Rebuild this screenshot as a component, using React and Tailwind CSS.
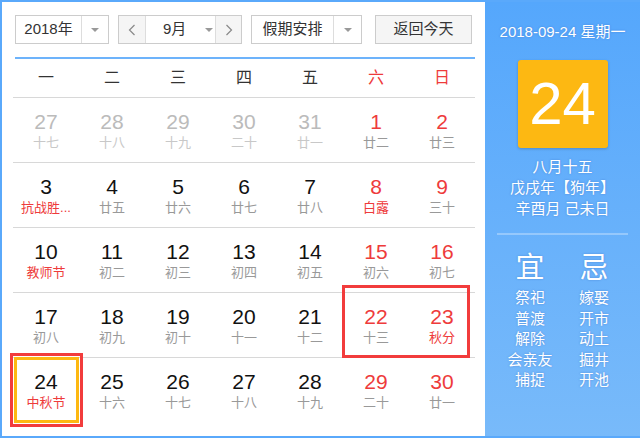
import React from "react";

const font = { fontFamily: '"Liberation Sans", Arial, "Noto Sans CJK SC", sans-serif' };

const weekdays = ["一", "二", "三", "四", "五", "六", "日"];

// [day, lunar, flags] flags: p = prev month, h = holiday text red
const rows = [
  [["27", "十七", "p"], ["28", "十八", "p"], ["29", "十九", "p"], ["30", "二十", "p"], ["31", "廿一", "p"], ["1", "廿二"], ["2", "廿三"]],
  [["3", "抗战胜...", "h"], ["4", "廿五"], ["5", "廿六"], ["6", "廿七"], ["7", "廿八"], ["8", "白露", "h"], ["9", "三十"]],
  [["10", "教师节", "h"], ["11", "初二"], ["12", "初三"], ["13", "初四"], ["14", "初五"], ["15", "初六"], ["16", "初七"]],
  [["17", "初八"], ["18", "初九"], ["19", "初十"], ["20", "十一"], ["21", "十二"], ["22", "十三"], ["23", "秋分", "h"]],
  [["24", "中秋节", "h"], ["25", "十六"], ["26", "十七"], ["27", "十八"], ["28", "十九"], ["29", "二十"], ["30", "廿一"]],
];

const yi = ["祭祀", "普渡", "解除", "会亲友", "捕捉"];
const ji = ["嫁娶", "开市", "动土", "掘井", "开池"];

function Caret() {
  return <span className="w-0 h-0 border-l-[4px] border-r-[4px] border-t-[4px] border-l-transparent border-r-transparent border-t-[#999]" />;
}

function Chevron({ dir }) {
  return (
    <svg width="8" height="12" viewBox="0 0 8 12">
      <polyline
        points={dir === "left" ? "6.5,1 1.5,6 6.5,11" : "1.5,1 6.5,6 1.5,11"}
        fill="none"
        stroke="#888"
        strokeWidth="1.2"
      />
    </svg>
  );
}

function Cell({ d, col }) {
  const [day, lunar, flag] = d;
  const weekend = col >= 5;
  let numColor = "text-[#111]";
  if (flag === "p") numColor = "text-[#bbb]";
  else if (weekend) numColor = "text-[#ee3b3b]";
  let lunarColor = "text-[#999]";
  if (flag === "p") lunarColor = "text-[#c8c8c8]";
  if (flag === "h") lunarColor = "text-[#ee3b3b]";
  return (
    <div className="flex flex-col items-center pt-[12px]">
      <div className={`text-[21px] leading-[24px] ${numColor}`}>{day}</div>
      <div className={`text-[13px] leading-[18px] whitespace-nowrap ${lunarColor}`}>{lunar}</div>
    </div>
  );
}

export default function App() {
  return (
    <div className="relative w-[640px] h-[440px] bg-white" style={font}>
      <div className="flex h-[438px] border-l-2 border-t-2 border-b-2 border-[#5aa9fb]">
        {/* calendar */}
        <div className="w-[483px] pt-[13px]">
          <div className="flex items-center h-[29px] ml-[13px] text-[15px] text-[#333]">
            <div className="flex h-full w-[94px] border border-[#ccc]">
              <div className="flex-1 flex items-center justify-center">2018年</div>
              <div className="w-[27px] border-l border-[#ddd] flex items-center justify-center">
                <Caret />
              </div>
            </div>
            <div className="flex h-full w-[124px] ml-[9px] border border-[#ccc]">
              <div className="w-[27px] bg-[#f5f5f5] border-r border-[#ddd] flex items-center justify-center">
                <Chevron dir="left" />
              </div>
              <div className="flex-1 flex items-center pl-[17px] gap-[19px]">
                <span>9月</span>
                <Caret />
              </div>
              <div className="w-[26px] bg-[#f5f5f5] border-l border-[#ddd] flex items-center justify-center">
                <Chevron dir="right" />
              </div>
            </div>
            <div className="flex h-full w-[111px] ml-[9px] border border-[#ccc]">
              <div className="flex-1 flex items-center justify-center">假期安排</div>
              <div className="w-[28px] border-l border-[#ddd] flex items-center justify-center">
                <Caret />
              </div>
            </div>
            <div className="flex h-full w-[97px] ml-[13px] border border-[#ccc] bg-[#f5f5f5] items-center justify-center">
              返回今天
            </div>
          </div>

          <div className="ml-[13px] w-[460px] mt-[13px] h-[2px] bg-[#6db3fb]" />

          <div className="ml-[11px] w-[462px]">
            <div className="grid grid-cols-7 h-[39px] items-center border-b border-[#d8d8d8] text-[16px]">
              {weekdays.map((w, i) => (
                <div key={w} className={`text-center ${i >= 5 ? "text-[#ee3b3b]" : "text-[#333]"}`}>
                  {w}
                </div>
              ))}
            </div>
            {rows.map((r, ri) => (
              <div
                key={ri}
                className={`grid grid-cols-7 h-[65px] ${ri < 4 ? "border-b border-[#d8d8d8]" : ""}`}
              >
                {r.map((d, ci) => (
                  <Cell key={ci} d={d} col={ci} />
                ))}
              </div>
            ))}
          </div>
        </div>

        {/* side panel */}
        <div className="flex-1 bg-linear-to-b from-[#55a7fc] to-[#78bafa] text-white flex flex-col [text-shadow:0_0_2px_rgba(40,80,170,0.45)]">
          <div className="pt-[20px] text-[15px] leading-[20px] text-center">2018-09-24 星期一</div>
          <div className="mt-[18px] mx-auto w-[90px] h-[88px] rounded-[3px] bg-[#fdb812] shadow-[0_1px_3px_rgba(0,0,0,0.2)] flex items-center justify-center text-[60px] leading-none [text-shadow:none]">
            24
          </div>
          <div className="mt-[8px] text-center text-[15px] leading-[21px]">
            <div>八月十五</div>
            <div>戊戌年【狗年】</div>
            <div>辛酉月 己未日</div>
          </div>
          <div className="mt-[14px] mx-[12px] h-[2px] bg-white/30" />
          <div className="flex pl-[13px] mt-[17px]">
            <div className="w-[64px] flex flex-col items-center">
              <div className="text-[29px] leading-[32px]">宜</div>
              <div className="mt-[4px] text-[15px] leading-[20.5px] text-center">
                {yi.map((t) => (
                  <div key={t}>{t}</div>
                ))}
              </div>
            </div>
            <div className="w-[64px] flex flex-col items-center">
              <div className="text-[29px] leading-[32px]">忌</div>
              <div className="mt-[4px] text-[15px] leading-[20.5px] text-center">
                {ji.map((t) => (
                  <div key={t}>{t}</div>
                ))}
              </div>
            </div>
          </div>
        </div>
      </div>

      {/* today marker and annotation boxes */}
      <div className="absolute left-[14px] top-[357px] w-[65px] h-[66px] border-[3px] border-[#fdb812]" />
      <div className="absolute left-[10px] top-[353px] w-[73px] h-[74px] border-[3px] border-[#f23c3c]" />
      <div className="absolute left-[342px] top-[285px] w-[128px] h-[73px] border-[3px] border-[#f23c3c]" />
    </div>
  );
}
